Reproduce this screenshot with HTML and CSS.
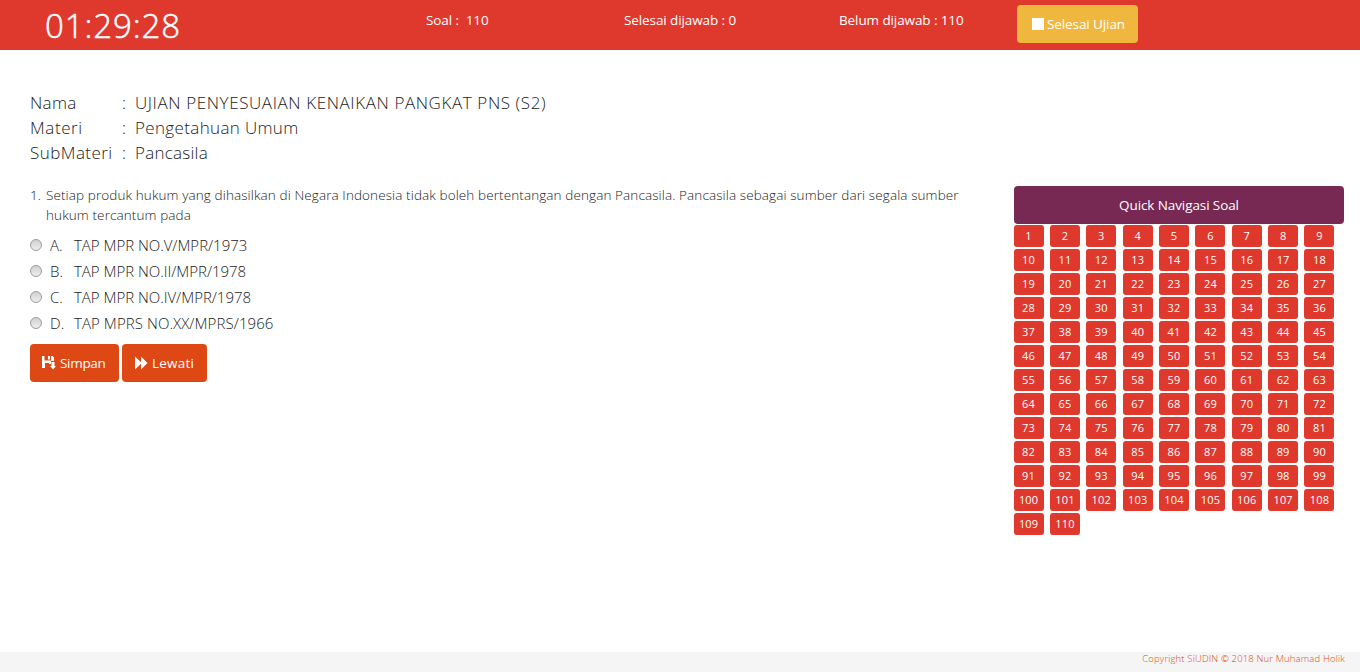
FILE: index.html
```html
<!DOCTYPE html>
<html lang="id">
<head>
<meta charset="utf-8">
<title>SiUDIN</title>
<link rel="stylesheet" href="styles.css">
</head>
<body>
<header class="topbar">
  <div class="timer">01:29:28</div>
  <div class="stat stat-total">Soal :&nbsp; 110</div>
  <div class="stat stat-done">Selesai dijawab : 0</div>
  <div class="stat stat-left">Belum dijawab : 110</div>
  <button class="btn btn-finish"><span class="stop"></span><span class="finish-label">Selesai Ujian</span></button>
</header>
<main class="content">
  <dl class="info">
    <dt class="nama">Nama</dt><dd class="colon">:</dd><dd class="exam">UJIAN PENYESUAIAN KENAIKAN PANGKAT PNS (S2)</dd>
    <dt class="materi">Materi</dt><dd class="colon">:</dd><dd class="subject">Pengetahuan Umum</dd>
    <dt class="submateri">SubMateri</dt><dd class="colon">:</dd><dd class="topic">Pancasila</dd>
  </dl>
  <div class="columns">
    <section class="question">
      <div class="prompt"><span>1.</span><p><span class="line-one">Setiap produk hukum yang dihasilkan di Negara Indonesia tidak boleh bertentangan dengan Pancasila. Pancasila sebagai sumber dari segala sumber</span><br><span class="line-two">hukum tercantum pada</span></p></div>
      <div class="options">
        <label class="option"><input type="radio" name="answer" class="radio"><span>A.</span><span>TAP MPR NO.V/MPR/1973</span></label>
        <label class="option"><input type="radio" name="answer" class="radio"><span>B.</span><span>TAP MPR NO.II/MPR/1978</span></label>
        <label class="option"><input type="radio" name="answer" class="radio"><span>C.</span><span>TAP MPR NO.IV/MPR/1978</span></label>
        <label class="option option-wide"><input type="radio" name="answer" class="radio"><span>D.</span><span>TAP MPRS NO.XX/MPRS/1966</span></label>
      </div>
      <div class="actions">
        <button class="btn btn-save"><svg class="icon" width="14" height="14" viewBox="0 0 14 14"><path fill="#fff" fill-rule="evenodd" d="M0 0H2.5V4.5H9V0H10.5L12 1.5V5H9V8H7V7H3V12H0ZM6 0H8V3.5H6ZM9.5 6H12.5V10H14L11 13.5L8 10H9.5Z"/></svg>Simpan</button>
        <button class="btn btn-skip"><svg class="icon" width="14" height="14" viewBox="0 0 14 14"><path fill="#fff" d="M1 .5L7 6.3V.5L13.5 7L7 13.5V7.7L1 13.5Z"/></svg>Lewati</button>
      </div>
    </section>
    <aside class="navigator">
      <div class="nav-title">Quick Navigasi Soal</div>
      <div class="nav-grid" id="nav-grid"></div>
    </aside>
  </div>
</main>
<footer class="footer">Copyright SiUDIN © 2018 Nur Muhamad Holik</footer>
<script src="script.js"></script>
</body>
</html>
```
FILE: script.js
```js
const grid = document.getElementById('nav-grid');
for (let i = 1; i <= 110; i++) {
  const b = document.createElement('button');
  b.className = 'num';
  b.textContent = i;
  grid.appendChild(b);
}
```
FILE: styles.css
```css
* { box-sizing: border-box; }
body {
  margin: 0; height: 672px; display: flex; flex-direction: column; overflow: hidden;
  background: #fff; color: #222;
  font-family: "Open Sans", "Noto Sans", sans-serif; font-size: 14px; line-height: 20px; font-weight: 300;
}
button { font: inherit; border: 0; margin: 0; padding: 0; color: #fff; white-space: nowrap; }
.topbar { height: 50px; flex: none; background: #df382c; color: #fff; display: flex; font-weight: 400; font-size: 13.5px; white-space: nowrap; }
.timer { width: 381px; margin-left: 45px; font-size: 33px; line-height: 51px; font-weight: 300; letter-spacing: 0.9px; -webkit-text-stroke: 0.5px #fff; }
.stat { padding-top: 10px; letter-spacing: -0.1px; }
.stat-total { width: 198px; }
.stat-done { width: 215px; }
.stat-left { width: 178px; }
.btn { height: 38px; border-radius: 4px; display: flex; align-items: center; font-size: 13.5px; font-weight: 400; }
.btn-finish { width: 121px; margin-top: 5px; padding-left: 15px; gap: 3px; background: #efb73e; letter-spacing: -0.1px; }
.stop { width: 12px; height: 12px; background: #fff; }
.content { flex: 1; padding: 40px 16px 0 30px; }
.info { margin: 0; display: grid; grid-template-columns: 92px 13px 1fr; font-size: 17px; line-height: 25px; letter-spacing: 0.35px; }
.info dd { margin: 0; }
.info .exam { letter-spacing: 0.6px; }
.info .materi { letter-spacing: 0.6px; }
.info .submateri { letter-spacing: 0.45px; }
.info .topic { letter-spacing: 0.25px; }
.columns { display: flex; justify-content: space-between; margin-top: 21px; }
.question { width: 960px; margin-top: -1px; }
.prompt { display: grid; grid-template-columns: 16px 1fr; font-size: 13.5px; line-height: 20px; white-space: nowrap; letter-spacing: 0.104px; }
.prompt p { margin: 0; }
.options { margin-top: 7px; font-size: 15px; }
.option { display: grid; grid-template-columns: 20px 24px 1fr; height: 26px; line-height: 26px; align-items: center; letter-spacing: -0.02px; }
.option-wide { letter-spacing: 0.08px; }
.radio { appearance: none; width: 12px; height: 12px; margin: 0; border: 1px solid #9c9c9c; border-radius: 50%; background: linear-gradient(#d0d0d0, #eee); }
.actions { display: flex; gap: 3px; margin-top: 8px; }
.btn-save, .btn-skip { background: #dd4814; padding-left: 12px; gap: 4px; }
.btn-save { width: 89px; letter-spacing: -0.3px; }
.btn-skip { width: 85px; letter-spacing: 0.2px; }
.navigator { width: 330px; }
.nav-title { height: 38px; border-radius: 4px; background: #772953; color: #fff; text-align: center; line-height: 38px; font-size: 13.5px; font-weight: 400; letter-spacing: -0.1px; }
.nav-grid { display: grid; grid-template-columns: repeat(9, 36.36px); grid-auto-rows: 24px; padding-top: 1px; margin-left: -0.4px; }
.num { width: 30px; height: 22px; border-radius: 3px; background: #df382c; font-size: 11px; line-height: 22px; text-align: center; font-weight: 500; letter-spacing: 0.2px; }
.footer { height: 20px; flex: none; background: #f5f5f5; color: #dd4814; text-align: right; padding-right: 15px; font-size: 9.5px; line-height: 14px; letter-spacing: 0.15px; }
```
